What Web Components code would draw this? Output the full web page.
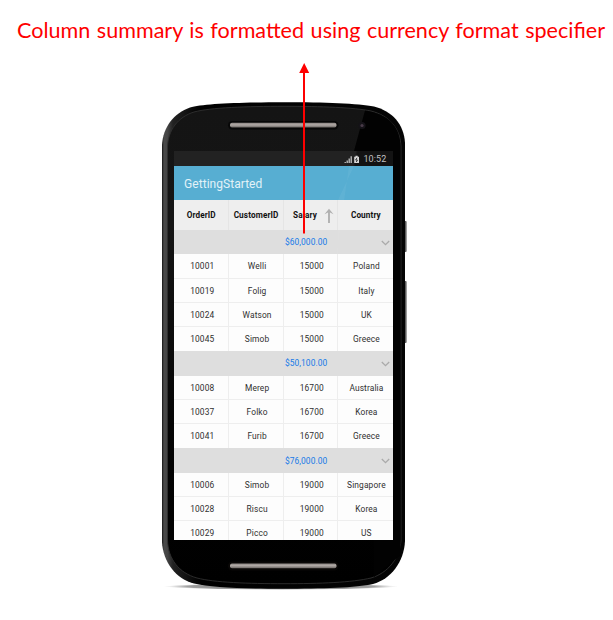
<!DOCTYPE html>
<html lang="en"><head><meta charset="utf-8"><title>GettingStarted</title>
<style>
html,body{margin:0;background:#fff}
body{width:613px;height:620px;overflow:hidden;font-family:Roboto,"Liberation Sans",sans-serif}
</style></head><body>
<callout-page></callout-page>
<script>
const define=(name,html,setup)=>customElements.define(name,class extends HTMLElement{
  constructor(){super();this.attachShadow({mode:'open'});}
  connectedCallback(){if(this.shadowRoot.childNodes.length)return;this.shadowRoot.innerHTML=html;if(setup)setup(this,this.shadowRoot);}
});

define('note-title',`<style>
:host{display:block;height:101px;padding-left:16.5px;box-sizing:border-box;color:#fe0000;font:21.2px/60px Lato,"Liberation Sans",sans-serif;word-spacing:1px}
span{display:inline-block;white-space:nowrap;transform-origin:0 50%}
</style><span><slot></slot></span>`,(host,root)=>{
  const s=root.querySelector('span');
  s.style.transform='scaleX('+588/s.getBoundingClientRect().width+')';
});

define('note-arrow',`<style>
:host{position:absolute;left:298px;top:62px;width:13px;height:172px}svg{display:block}
</style><svg width="13" height="172"><path d="M6.200 1 11.200 11H1.200Z" fill="#fe0000"/><path d="M6 10V171.500" stroke="#fe0000" stroke-width="2"/></svg>`);

define('phone-frame',`<style>
:host{display:block;position:relative;width:270px;height:499px;margin-left:150px}
svg{position:absolute;inset:0;display:block}
.screen{position:relative;padding:50px 26.7px 0 24.3px}
.glare{pointer-events:none}
</style>
<svg width="270" height="499" viewBox="150 101 270 499">
<defs>
<linearGradient id="edge" x1="0" x2="1"><stop offset="0" stop-color="#151515"/><stop offset=".008" stop-color="#4a4a4a"/><stop offset=".022" stop-color="#444"/><stop offset=".045" stop-color="#222"/><stop offset=".16" stop-color="#000"/><stop offset="1" stop-color="#050505"/></linearGradient>
<linearGradient id="fade" x1="0" y1="0" x2="0" y2="1"><stop offset="0" stop-color="#141414"/><stop offset=".25" stop-color="#151515"/><stop offset=".75" stop-color="#020202"/><stop offset="1" stop-color="#000"/></linearGradient>
<linearGradient id="bar" x1="0" y1="0" x2="0" y2="1"><stop offset="0" stop-color="#8b8582"/><stop offset=".45" stop-color="#b1aaa6"/><stop offset="1" stop-color="#6b6663"/></linearGradient>
<radialGradient id="shade"><stop offset="0" stop-color="#333" stop-opacity=".8"/><stop offset=".8" stop-color="#777" stop-opacity=".7"/><stop offset="1" stop-color="#bbb" stop-opacity="0"/></radialGradient>
</defs>
<ellipse cx="281" cy="586.500" rx="117" ry="3.400" fill="url(#shade)"/>
<rect x="404" y="221" width="2.6" height="31" rx="1" fill="#5c5c5c"/><rect x="404" y="281" width="2.6" height="62" rx="1" fill="#5c5c5c"/>
<path d="M162 145C163 127 174 113 190 107.500C202 103.500 240 102.200 284 102.200C325 102.200 358 103.300 374 106.500C392 111 404 124 405 143V541C404 562 391 579 373 584C356 587.800 322 588.700 283 588.700C244 588.700 211 587.500 194 583.500C176 579 163 562 162 542Z" fill="url(#edge)"/>
<path d="M167.500 147C168 130 178 117 194 112C210 107.500 248 106.300 284 106.300C322 106.300 354 107.500 371 111C389 115.500 400.500 128 401 147V540C400 558 388 573 371 578C352 582.500 320 583.700 284 583.700C248 583.700 214 582.500 197 578C179 573 168 559 167.500 540Z" fill="url(#fade)" stroke="#303030" stroke-width=".9"/>
<path d="M365 110.500C389 114 400.500 127 400.500 147V555L374 577V151H354Z" fill="#020202"/>
<rect x="228" y="121" width="110.500" height="8.500" rx="4.200" fill="#070707"/><rect x="230" y="122.800" width="106.500" height="4.700" rx="2" fill="url(#bar)"/>
<rect x="228" y="561.500" width="110.500" height="9" rx="4.200" fill="#090706"/><rect x="230" y="563.400" width="106.500" height="4.900" rx="2" fill="url(#bar)"/>
<circle cx="362" cy="125.500" r="3.600" fill="#151318"/><circle cx="362" cy="125.500" r="1.600" fill="#493c49"/>
</svg>
<div class="screen"><slot></slot></div>
<svg class="glare" width="270" height="499" viewBox="150 101 270 499"><path d="M354 166H349L328 315H338V200Z" fill="#fff" opacity=".05"/></svg>`);

define('app-screen',`<style>
:host{display:flex;flex-direction:column;height:388.700px;background:#fff;overflow:hidden}
</style><slot></slot>`);

define('status-bar',`<style>
:host{display:flex;flex:none;align-items:center;justify-content:flex-end;height:15px;padding:1px 7px 0 0;background:linear-gradient(100deg,#222 82%,#131313 83%);color:#c2c2c2;font-size:9px;line-height:15px;box-sizing:border-box}
svg{margin-right:2px}span{letter-spacing:.1px}
</style><svg width="17" height="9" viewBox="0 0 17 9"><path d="M1.200 8V7M3.200 8V5.500M5.200 8V3.500M7.200 8V1.300" stroke="#c4c4c4" stroke-width="1.300"/><path d="M10.200 1.700h1.300V.7h2.200v1h1.300V8h-4.800Z" fill="#d8d8d8"/><path d="M13 2.800 11.700 5h1.700l-1.100 2" fill="none" stroke="#222" stroke-width=".9"/></svg><span><slot></slot></span>`);

define('app-bar',`<style>
:host{display:flex;flex:none;align-items:center;height:34px;padding:1.500px 0 0 9.800px;box-sizing:border-box;background:#57aed2;color:#e2f2f8;font-size:12px;letter-spacing:.04px}
</style><slot></slot>`);

define('data-grid',`<style>
:host{display:block;--cols:54.900px 54.800px 54.500px 1fr}
</style><slot></slot>`);

define('grid-header',`<style>
:host{display:grid;grid-template-columns:var(--cols);height:30px;background:#eee;color:#111;font:bold 8.200px/31px Roboto,sans-serif}
div{text-align:center;border-right:1px solid #e5e5e5;white-space:nowrap;letter-spacing:.12px;height:30px;box-sizing:border-box}
div:last-child{border:0}.sort{display:flex;justify-content:flex-end;gap:7px;padding-right:3.500px}svg{margin-top:8px}
</style><div>OrderID</div><div>CustomerID</div><div class="sort">Salary<svg width="10" height="16" viewBox="0 0 10 16"><path d="M5 15V3" stroke="#b0b0b0" stroke-width="1.900"/><path d="M5 .8 9.500 6.200 6 4.600H4L.5 6.200Z" fill="#b0b0b0"/></svg></div><div>Country</div>`);

define('summary-row',`<style>
:host{display:grid;grid-template-columns:var(--cols);align-items:center;height:24.270px;background:#dedede;color:#167ae8;font-size:8.400px;line-height:24px}
span{grid-column:3;padding-left:1px;letter-spacing:.08px}
svg{justify-self:end;margin:1px 3px 0 0}
</style><span><slot></slot></span><svg width="9" height="6" viewBox="0 0 9 6"><path d="M.8 1 4.500 4.700 8.200 1" fill="none" stroke="#aaa" stroke-width="1.300"/></svg>`);

define('data-row',`<style>
:host{display:grid;grid-template-columns:var(--cols);height:24.270px;background:#fdfdfd;color:#303030;font-size:8.400px;line-height:25px}
div{text-align:center;padding-left:2px;border:0 solid #eee;border-width:0 1px 1px 0;box-sizing:border-box;white-space:nowrap;letter-spacing:.12px;height:24.270px}
div:last-child{border-right:0;padding-left:1px}
:host([last]) div{border-bottom:0}
</style>`,(host,root)=>{
  for(const v of host.getAttribute('values').split('|')){const d=document.createElement('div');d.textContent=v;root.append(d);}
});

const groups=[
 ['$60,000.00',['10001|Welli|15000|Poland','10019|Folig|15000|Italy','10024|Watson|15000|UK','10045|Simob|15000|Greece']],
 ['$50,100.00',['10008|Merep|16700|Australia','10037|Folko|16700|Korea','10041|Furib|16700|Greece']],
 ['$76,000.00',['10006|Simob|19000|Singapore','10028|Riscu|19000|Korea','10029|Picco|19000|US']]
];
define('callout-page',`<style>:host{display:block;position:relative;width:613px;height:620px}</style>
<note-title>Column summary is formatted using currency format specifier</note-title>
<phone-frame><app-screen><status-bar>10:52</status-bar><app-bar>GettingStarted</app-bar><data-grid><grid-header></grid-header>${
groups.map(([sum,rows])=>`<summary-row>${sum}</summary-row>`+rows.map((r,i)=>`<data-row values="${r}"${i===rows.length-1?' last':''}></data-row>`).join('')).join('')
}</data-grid></app-screen></phone-frame><note-arrow></note-arrow>`);
</script></body></html>
